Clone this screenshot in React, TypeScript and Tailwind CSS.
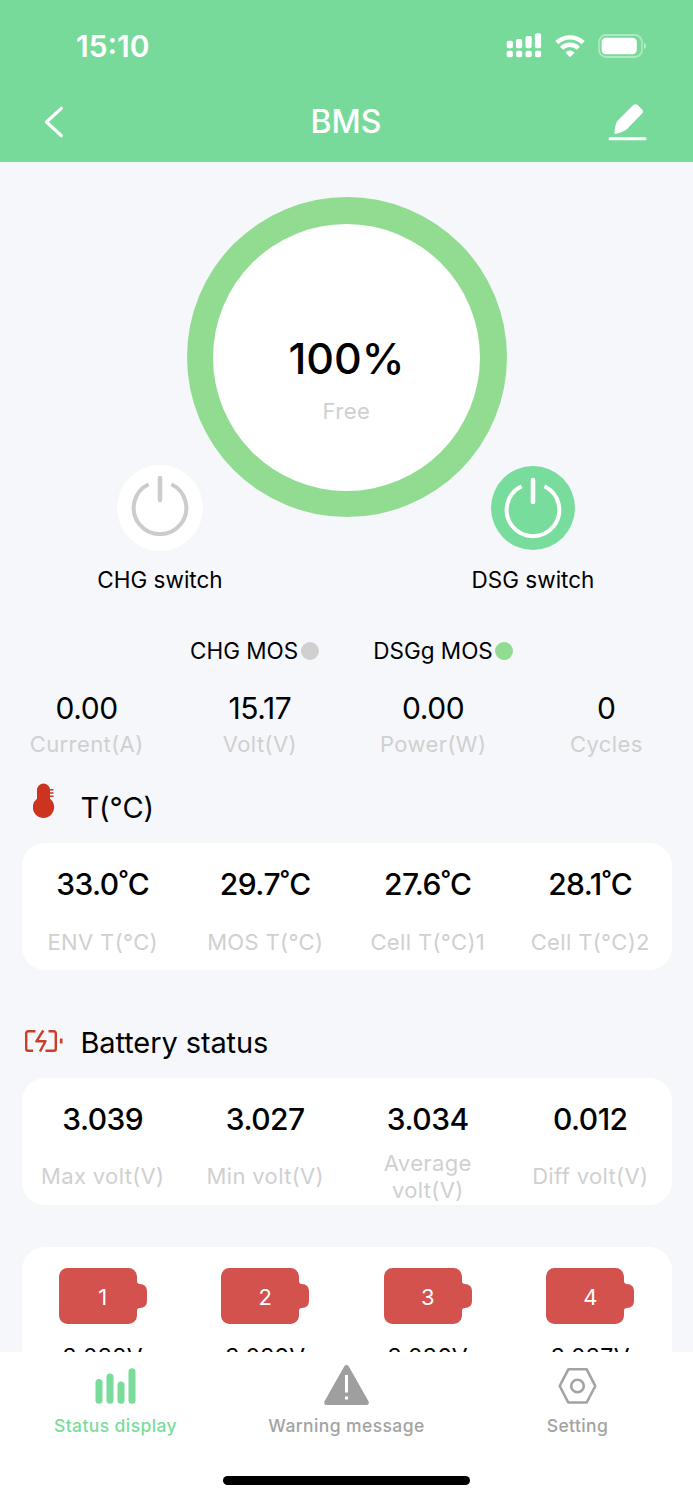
// src/App.tsx
import React from 'react'

type Reading = { value: string; label: string; unit?: string }

const summary: Reading[] = [
  { value: '0.00', label: 'Current(A)' },
  { value: '15.17', label: 'Volt(V)' },
  { value: '0.00', label: 'Power(W)' },
  { value: '0', label: 'Cycles' },
]

const temperatures: Reading[] = [
  { value: '33.0', unit: '˚C', label: 'ENV T(°C)' },
  { value: '29.7', unit: '˚C', label: 'MOS T(°C)' },
  { value: '27.6', unit: '˚C', label: 'Cell T(°C)1' },
  { value: '28.1', unit: '˚C', label: 'Cell T(°C)2' },
]

const voltages: Reading[] = [
  { value: '3.039', label: 'Max volt(V)' },
  { value: '3.027', label: 'Min volt(V)' },
  { value: '3.034', label: 'Average volt(V)' },
  { value: '0.012', label: 'Diff volt(V)' },
]

const cells = ['3.038V', '3.039V', '3.036V', '3.037V']

const SignalIcon = () => (
  <svg width="36" height="26" viewBox="0 0 36 26" fill="currentColor" aria-hidden="true">
    <rect x="0.7" y="7.8" width="6.2" height="7.4" rx="1.8" />
    <rect x="10" y="6.1" width="6.2" height="9.1" rx="1.8" />
    <rect x="19.5" y="3.1" width="6.2" height="12.1" rx="1.8" />
    <rect x="28.9" y="0.3" width="6.2" height="14.9" rx="1.8" />
    <rect x="0.7" y="17.8" width="6.2" height="6.4" rx="1.8" />
    <rect x="10" y="17.8" width="6.2" height="6.4" rx="1.8" />
    <rect x="19.5" y="17.8" width="6.2" height="6.4" rx="1.8" />
    <rect x="28.9" y="17.8" width="6.2" height="6.4" rx="1.8" />
  </svg>
)

const WifiIcon = () => (
  <svg width="30" height="23" viewBox="0 0 30 23" aria-hidden="true">
    <g fill="none" stroke="currentColor" strokeWidth="4.4">
      <path d="M1.8 7.7a19 19 0 0 1 26.4 0" />
      <path d="M6.6 13.2a11.8 11.8 0 0 1 16.8 0" />
    </g>
    <path d="M15 21.7 10.9 17.6a6.2 6.2 0 0 1 8.2 0Z" fill="currentColor" stroke="currentColor" strokeWidth="1" strokeLinejoin="round" />
  </svg>
)

const PhoneBatteryIcon = () => (
  <svg width="50" height="24" viewBox="0 0 50 24" aria-hidden="true">
    <rect x="1" y="1" width="43" height="22" rx="7" fill="none" stroke="white" strokeOpacity="0.4" strokeWidth="1.8" />
    <rect x="3.6" y="3.8" width="35.2" height="16.4" rx="4.2" fill="white" />
    <path d="M46 8.8c2.6 1.2 2.6 5.2 0 6.4Z" fill="white" fillOpacity="0.5" />
  </svg>
)

const BackIcon = () => (
  <svg width="20" height="32" viewBox="0 0 20 32" fill="none" aria-hidden="true">
    <path d="M17.3 2.3 2.5 16l14.8 13.7" stroke="white" strokeWidth="3.2" strokeLinecap="round" strokeLinejoin="round" />
  </svg>
)

const EditIcon = () => (
  <svg width="40" height="38" viewBox="0 0 40 38" fill="white" aria-hidden="true">
    <path d="M7.9 30.8c-1 .3-1.6-.3-1.5-1.2.4-4 .9-7.7 2.5-11.2L25 2.3c1.5-1.5 3.4-1.5 4.9-.1l4 4.1c1.3 1.4 1.3 3.1 0 4.5L18.8 26.2c-3 2.2-7 3.7-10.9 4.6Z" />
    <rect x="0.5" y="34.3" width="38" height="3" rx="1.5" />
  </svg>
)

const PowerIcon = ({ on }: { on: boolean }) => (
  <svg width="86" height="86" viewBox="0 0 86 86" fill="none" aria-hidden="true">
    <circle cx="43" cy="43" r={on ? 42 : 43} fill={on ? '#77dc9c' : '#fff'} />
    <g
      transform={on ? 'translate(0 2)' : undefined}
      stroke={on ? '#fff' : '#ccc'}
      strokeWidth="4"
      strokeLinecap="round"
    >
      <path d="M43 13v22" strokeWidth="4.6" />
      <path d="M31.6 19.2a26.3 26.3 0 1 0 22.8 0" strokeLinecap="butt" />
    </g>
  </svg>
)

const ThermometerIcon = () => (
  <svg width="22" height="36" viewBox="0 0 22 36" fill="#cc3420" aria-hidden="true">
    <path d="M4 7a6.5 6.5 0 0 1 13 0v8.7a10.7 10.7 0 1 1-13 0Z" />
    <path d="M16 6h4.5v1.5H16ZM16 9.2h4.5v1.5H16ZM16 12.4h4.5v1.5H16Z" />
  </svg>
)

const ChargeIcon = () => (
  <svg width="40" height="24" viewBox="0 0 40 24" fill="none" stroke="#cc3d28" strokeWidth="2.4" aria-hidden="true">
    <path d="M11.5 2.2H4.2a2 2 0 0 0-2 2v15.6a2 2 0 0 0 2 2H9" />
    <path d="M24.5 2.2h5.3a2 2 0 0 1 2 2v15.6a2 2 0 0 1-2 2h-8.3" />
    <path d="M19.3 1.5 12.3 12.3h9.2L16 22.5" strokeLinejoin="round" />
    <path d="M37.2 9.5v5" strokeWidth="2.6" />
  </svg>
)

const CellIcon = () => (
  <svg width="90" height="58" viewBox="0 0 90 58" fill="#d3524d" aria-hidden="true">
    <path d="M9.5 1h61a8.5 8.5 0 0 1 8.500 8.500v4.500q0 2.700 2.700 2.900 7.300.3 7.300 7.100v10q0 6.800-7.300 7.100-2.700.2-2.700 2.900v4.500a8.500 8.500 0 0 1-8.500 8.500h-61A8.500 8.500 0 0 1 1 48.500v-39A8.500 8.500 0 0 1 9.500 1Z" />
  </svg>
)

const StatusIcon = () => (
  <svg width="42" height="42" viewBox="0 0 42 42" fill="#79dc9b" aria-hidden="true">
    <rect x="0.5" y="15" width="7" height="24.8" rx="3.5" />
    <rect x="11.5" y="9.5" width="7" height="30.3" rx="3.5" />
    <rect x="22.5" y="17.6" width="7" height="22.2" rx="3.5" />
    <rect x="33.5" y="4.2" width="7" height="35.6" rx="3.5" />
  </svg>
)

const WarningIcon = () => (
  <svg width="46" height="42" viewBox="0 0 46 42" aria-hidden="true">
    <path d="M22.5 3.5 42.3 38.5H2.7Z" fill="#9f9f9f" stroke="#9f9f9f" strokeWidth="5" strokeLinejoin="round" />
    <path d="M21 11h3v17.5h-3ZM21 32.5h3v3h-3Z" fill="white" />
  </svg>
)

const SettingIcon = () => (
  <svg width="42" height="42" viewBox="0 0 42 42" fill="none" stroke="#a3a3a3" strokeWidth="2.6" strokeLinejoin="round" aria-hidden="true">
    <path d="M11.3 5.3h18.400L38.300 22l-8.600 16.500H11.300L2.700 22Z" />
    <circle cx="20.5" cy="22" r="6.3" />
  </svg>
)

const Switch = ({ on, label }: { on: boolean; label: string }) => (
  <div className="flex w-[140px] flex-col items-center">
    <PowerIcon on={on} />
    <div className="mt-[14px] whitespace-nowrap text-[22.5px] leading-[30px]">{label}</div>
  </div>
)

const SectionTitle = ({ icon, children }: { icon: React.ReactNode; children: React.ReactNode }) => (
  <h2 className="flex h-[36px] items-center text-[29px] font-normal tracking-[-0.1px]">
    <span className="flex w-[80.5px] shrink-0">{icon}</span>
    {children}
  </h2>
)

const ReadingCard = ({ items }: { items: Reading[] }) => (
  <section className="mx-[21.5px] grid h-[127px] grid-cols-4 rounded-[23px] bg-white pt-[21px] text-center">
    {items.map((r) => (
      <div key={r.label} className="flex flex-col items-center">
        <div className="whitespace-nowrap text-[30px] leading-[40px] font-medium tracking-[-0.5px]">
          {r.value}
          {r.unit}
        </div>
        <div className="mt-[10px] flex h-[56px] w-[140px] items-center justify-center text-[22px] leading-[27px] tracking-[0.35px] text-[#d0d0d0]">
          {r.label}
        </div>
      </div>
    ))}
  </section>
)

export default function App() {
  const [tab, setTab] = React.useState('Status display')

  const tabs = [
    { name: 'Status display', icon: <StatusIcon /> },
    { name: 'Warning message', icon: <WarningIcon /> },
    { name: 'Setting', icon: <SettingIcon /> },
  ]

  return (
    <div className="flex h-[1500px] w-[693px] flex-col overflow-hidden bg-[#f5f7fb] font-['Inter',sans-serif] text-black">
      {/* Header */}
      <header className="h-[162px] shrink-0 bg-[#78da9a] text-white">
        <div className="flex h-[92px] items-center justify-between pr-[45px] pl-[76px]">
          <span className="text-[30px] leading-[40px] font-semibold">15:10</span>
          <div className="flex items-center gap-[13px]">
            <SignalIcon />
            <WifiIcon />
            <PhoneBatteryIcon />
          </div>
        </div>
        <div className="grid h-[60px] grid-cols-3 items-center pr-[45px] pl-[44px]">
          <BackIcon />
          <h1 className="text-center text-[32px] leading-[40px] font-medium">BMS</h1>
          <span className="justify-self-end">
            <EditIcon />
          </span>
        </div>
      </header>

      {/* Content */}
      <main className="min-h-0 flex-1 overflow-hidden pt-[35px]">
        <div className="mx-auto size-[320px] rounded-full bg-[#92dc91] p-[26.5px]">
          <div className="flex size-full flex-col items-center rounded-full bg-white pt-[104px]">
            <div className="text-[43px] leading-[60px] font-medium">100%</div>
            <div className="mt-[8px] text-[22px] leading-[30px] tracking-[0.5px] text-[#d0d0d0]">Free</div>
          </div>
        </div>

        <div className="-mt-[52px] flex justify-center gap-[233px]">
          <Switch on={false} label="CHG switch" />
          <Switch on label="DSG switch" />
        </div>

        <div className="mt-[41px] flex h-[30px] items-center pl-[190px] text-[22.5px] leading-[30px]">
          <span>CHG MOS</span>
          <span className="ml-[2.5px] size-[18px] rounded-full bg-[#d0d0d0]" />
          <span className="ml-[54.5px]">DSGg MOS</span>
          <span className="ml-[2.5px] size-[18px] rounded-full bg-[#92dc91]" />
        </div>

        <div className="mt-[22px] grid grid-cols-4 text-center">
          {summary.map((s) => (
            <div key={s.label}>
              <div className="text-[30px] leading-[41px] tracking-[-0.4px]">{s.value}</div>
              <div className="text-[22px] leading-[30px] tracking-[0.4px] text-[#d0d0d0]">{s.label}</div>
            </div>
          ))}
        </div>

        <div className="mt-[31px]">
          <SectionTitle icon={<span className="-mt-[15px] ml-[33px]"><ThermometerIcon /></span>}>T(°C)</SectionTitle>
        </div>
        <div className="mt-[17px]">
          <ReadingCard items={temperatures} />
        </div>

        <div className="mt-[55px]">
          <SectionTitle icon={<span className="-mt-[4px] ml-[23.5px]"><ChargeIcon /></span>}>Battery status</SectionTitle>
        </div>
        <div className="mt-[16.5px]">
          <ReadingCard items={voltages} />
        </div>

        <section className="mx-[21.5px] mt-[42.5px] grid h-[200px] grid-cols-4 rounded-t-[23px] bg-white pt-[20px]">
          {cells.map((v, i) => (
            <div key={v} className="flex flex-col items-center">
              <div className="grid place-items-center *:col-start-1 *:row-start-1">
                <CellIcon />
                <span className="pt-[2px] text-[22px] leading-[30px] text-white">{i + 1}</span>
              </div>
              <div className="mt-[17px] text-[23px] leading-[30px] tracking-[0.3px]">{v}</div>
            </div>
          ))}
        </section>
      </main>

      {/* Tab bar */}
      <nav className="flex h-[148px] shrink-0 flex-col items-center bg-white">
        <div className="grid w-full grid-cols-3 pt-[12px]">
          {tabs.map((t) => (
            <button key={t.name} onClick={() => setTab(t.name)} className="flex flex-col items-center">
              {t.icon}
              <span
                className={`mt-[8px] text-[17.5px] leading-[24px] font-medium tracking-[0.4px] ${
                  tab === t.name ? 'text-[#79dc9b]' : 'text-[#a3a3a3]'
                }`}
              >
                {t.name}
              </span>
            </button>
          ))}
        </div>
        <div className="mt-[38px] h-[9px] w-[247px] rounded-full bg-black" />
      </nav>
    </div>
  )
}
